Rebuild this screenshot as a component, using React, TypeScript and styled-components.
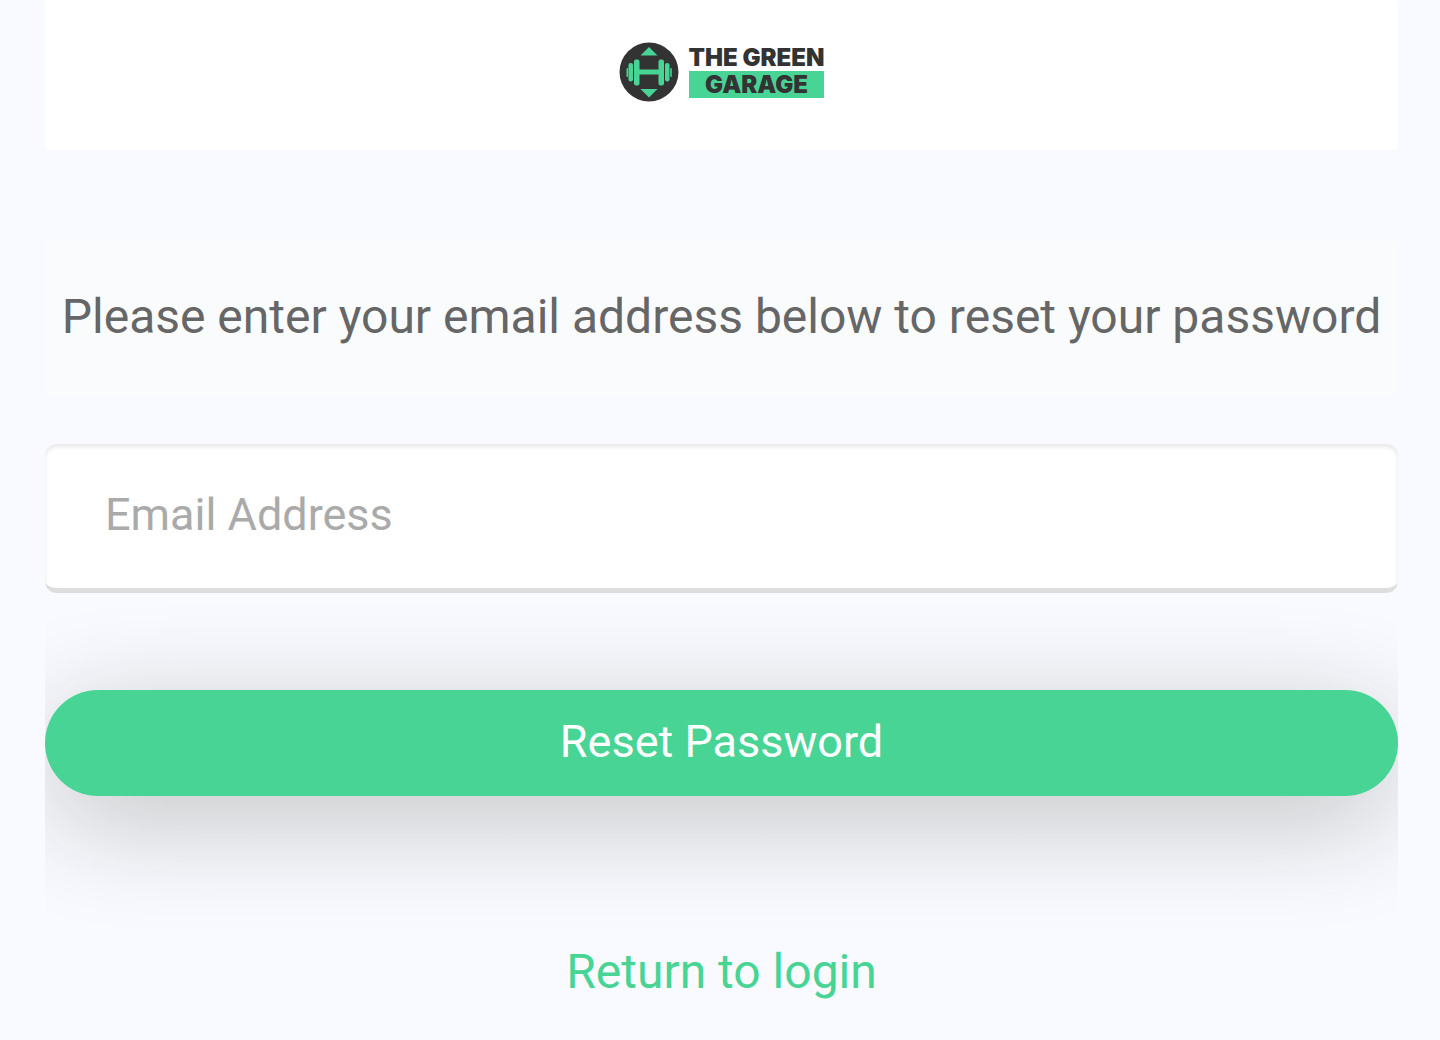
import React, { useState } from "react";
import styled, { createGlobalStyle } from "styled-components";

const green = "#47d494";
const ink = "#333333";

const GlobalStyle = createGlobalStyle`
  * { box-sizing: border-box; }
  body {
    margin: 0;
    background: #f8faff;
    font-family: Roboto, "Liberation Sans", sans-serif;
  }
`;

const Page = styled.main`
  padding: 0 42px 36px 45px;
`;

const Header = styled.header`
  display: flex;
  justify-content: center;
  padding: 42px 0 48px;
  background: #ffffff;
  border-radius: 4px;
`;

const Brand = styled.div`
  display: flex;
  align-items: center;
  gap: 10px;
  height: 60px;
`;

const Wordmark = styled.div`
  display: flex;
  flex-direction: column;
  padding-bottom: 2px;
  font: 900 24px/27px Inter, "Open Sans", sans-serif;
  color: ${ink};
  text-align: center;
`;

const WordBar = styled.span`
  background: ${green};
`;

const Message = styled.p`
  margin: 90px 0 48px;
  padding: 48px 0 50px;
  border-radius: 6px;
  background: #fafbfd;
  color: #666666;
  font-size: 48px;
  line-height: 58px;
  text-align: center;
`;

const Form = styled.form`
  display: flex;
  flex-direction: column;
  gap: 97px;
  padding-bottom: 146px;
  overflow-x: clip;
`;

const EmailInput = styled.input`
  width: 100%;
  height: 149px;
  padding: 0 60px 3px;
  border: 0;
  border-bottom: 5px solid #dddddd;
  border-radius: 12px;
  background: #ffffff;
  box-shadow: inset 0 3px 4px #e8e8e8;
  color: #666666;
  font: 400 45px/60px Roboto, "Liberation Sans", sans-serif;
  outline: none;

  &::placeholder {
    color: #aaaaaa;
    opacity: 1;
  }
`;

const SubmitButton = styled.button`
  height: 106px;
  padding: 0 48px 2px;
  border: 0;
  border-radius: 53px;
  background: ${green};
  box-shadow: 0 24px 108px #c2c2c2;
  color: #ffffff;
  font: 400 45px/60px Roboto, "Liberation Sans", sans-serif;
  cursor: pointer;
`;

const Footer = styled.nav`
  text-align: center;
`;

const LoginLink = styled.a`
  color: ${green};
  font-size: 48px;
  line-height: 60px;
  text-decoration: none;
`;

function DumbbellMark() {
  return (
    <svg width="60" height="60" viewBox="0 0 60 60" aria-hidden="true">
      <circle cx="30" cy="30" r="29.5" fill={ink} />
      <g fill={green}>
        <path d="M30 5 38.5 13.5H21.5Z" />
        <path d="M30 55.5 38.5 47H21.5Z" />
        <rect x="19" y="27.5" width="22" height="5" />
        <rect x="15" y="17.5" width="5.5" height="26" rx="2" />
        <rect x="39.5" y="17.5" width="5.5" height="26" rx="2" />
        <rect x="9.5" y="21" width="4.5" height="18.5" rx="2" />
        <rect x="46" y="21" width="4.5" height="18.5" rx="2" />
        <rect x="7.5" y="26" width="1.6" height="9" rx="0.8" />
        <rect x="51.2" y="26" width="1.6" height="9" rx="0.8" />
      </g>
    </svg>
  );
}

export default function App() {
  const [email, setEmail] = useState("");

  return (
    <>
      <GlobalStyle />
      <Page>
        <Header>
          <Brand>
            <DumbbellMark />
            <Wordmark>
              <span>THE GREEN</span>
              <WordBar>GARAGE</WordBar>
            </Wordmark>
          </Brand>
        </Header>
        <Message>Please enter your email address below to reset your password</Message>
        <Form onSubmit={(event) => event.preventDefault()}>
          <EmailInput
            type="email"
            name="email"
            aria-label="Email Address"
            placeholder="Email Address"
            value={email}
            onChange={(event) => setEmail(event.target.value)}
          />
          <SubmitButton type="submit">Reset Password</SubmitButton>
        </Form>
        <Footer>
          <LoginLink href="#login">Return to login</LoginLink>
        </Footer>
      </Page>
    </>
  );
}
